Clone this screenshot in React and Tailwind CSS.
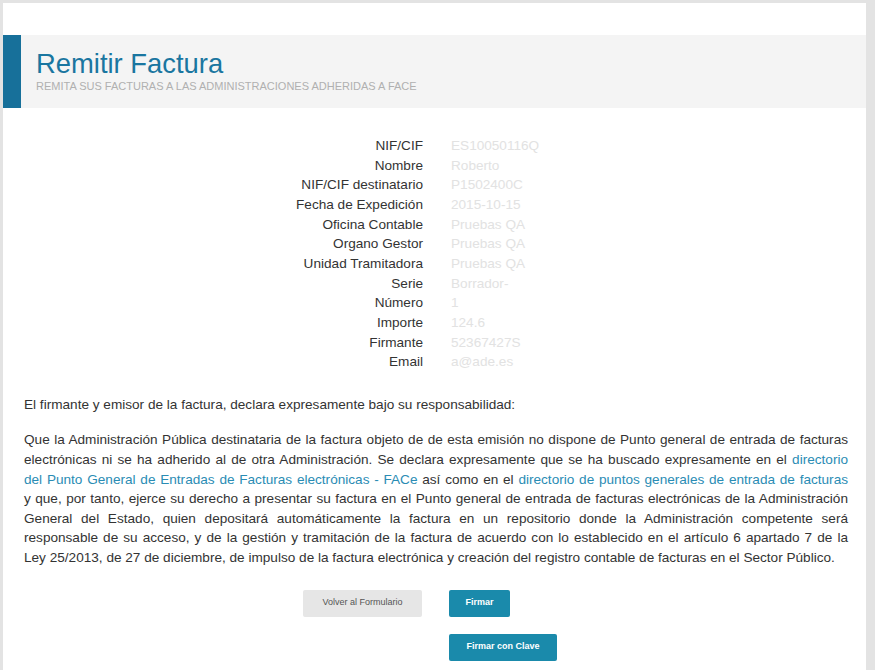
import React from 'react';

const campos = [
  ['NIF/CIF', 'ES10050116Q'],
  ['Nombre', 'Roberto'],
  ['NIF/CIF destinatario', 'P1502400C'],
  ['Fecha de Expedición', '2015-10-15'],
  ['Oficina Contable', 'Pruebas QA'],
  ['Organo Gestor', 'Pruebas QA'],
  ['Unidad Tramitadora', 'Pruebas QA'],
  ['Serie', 'Borrador-'],
  ['Número', '1'],
  ['Importe', '124.6'],
  ['Firmante', '52367427S'],
  ['Email', 'a@ade.es'],
];

const Enlace = ({ children }) => <a className="text-[#2a8cb4]">{children}</a>;

// las líneas del texto legal tal como cortan en la pantalla original
const Linea = ({ children }) => (
  <span className="block text-justify [text-align-last:justify]">{children}</span>
);

const App = () => {
  return (
    <div className="w-[875px] h-[670px] overflow-hidden bg-[#e3e3e3] pt-[3px] pl-[3px] pr-[9px] font-['Liberation_Sans',Arial,sans-serif]">
      <div className="h-full bg-white pt-[32px]">
        <div className="flex h-[73px] bg-[#f4f4f4]">
          <div className="w-[18px] bg-[#17709a]"></div>
          <div className="pl-[15px] pt-[13px]">
            <h1 className="text-[27.4px] leading-[31px] text-[#1a76a0]">Remitir Factura</h1>
            <p className="text-[11px] leading-[13px] mt-[1px] text-[#b0b0b0]">
              REMITA SUS FACTURAS A LAS ADMINISTRACIONES ADHERIDAS A FACE
            </p>
          </div>
        </div>

        <div className="mt-[28px] text-[13.6px] leading-[19.65px]">
          {campos.map(([label, value]) => (
            <div key={label} className="flex">
              <div className="w-[420px] text-right text-[#333]">{label}</div>
              <div className="pl-[28px] text-[#e2e2e2]">{value}</div>
            </div>
          ))}
        </div>

        <div className="pl-[21px] pr-[18px] text-[13.6px] leading-[19.6px] text-[#333]">
          <p className="mt-[23px]">
            El firmante y emisor de la factura, declara expresamente bajo su responsabilidad:
          </p>
          <p className="mt-[16px]">
            <Linea>Que la Administración Pública destinataria de la factura objeto de de esta emisión no dispone de Punto general de entrada de facturas</Linea>
            <Linea>electrónicas ni se ha adherido al de otra Administración. Se declara expresamente que se ha buscado expresamente en el <Enlace>directorio</Enlace></Linea>
            <Linea><Enlace>del Punto General de Entradas de Facturas electrónicas - FACe</Enlace> así como en el <Enlace>directorio de puntos generales de entrada de facturas</Enlace></Linea>
            <Linea>y que, por tanto, ejerce su derecho a presentar su factura en el Punto general de entrada de facturas electrónicas de la Administración</Linea>
            <Linea>General del Estado, quien depositará automáticamente la factura en un repositorio donde la Administración competente será</Linea>
            <Linea>responsable de su acceso, y de la gestión y tramitación de la factura de acuerdo con lo establecido en el artículo 6 apartado 7 de la</Linea>
            <span className="block">Ley 25/2013, de 27 de diciembre, de impulso de la factura electrónica y creación del registro contable de facturas en el Sector Público.</span>
          </p>
        </div>

        <div className="flex mt-[22px] pl-[300px] gap-[27px]">
          <button className="w-[119px] h-[27px] bg-[#e6e6e6] rounded-[2px] text-[9px] text-[#555]">
            Volver al Formulario
          </button>
          <div className="flex flex-col gap-[17px]">
            <button className="w-[61px] h-[27px] bg-[#1a8aab] rounded-[2px] text-[9px] text-white font-bold">
              Firmar
            </button>
            <button className="w-[108px] h-[27px] bg-[#1a8aab] rounded-[2px] text-[9px] text-white font-bold">
              Firmar con Clave
            </button>
          </div>
        </div>
      </div>
    </div>
  );
};

export default App;
